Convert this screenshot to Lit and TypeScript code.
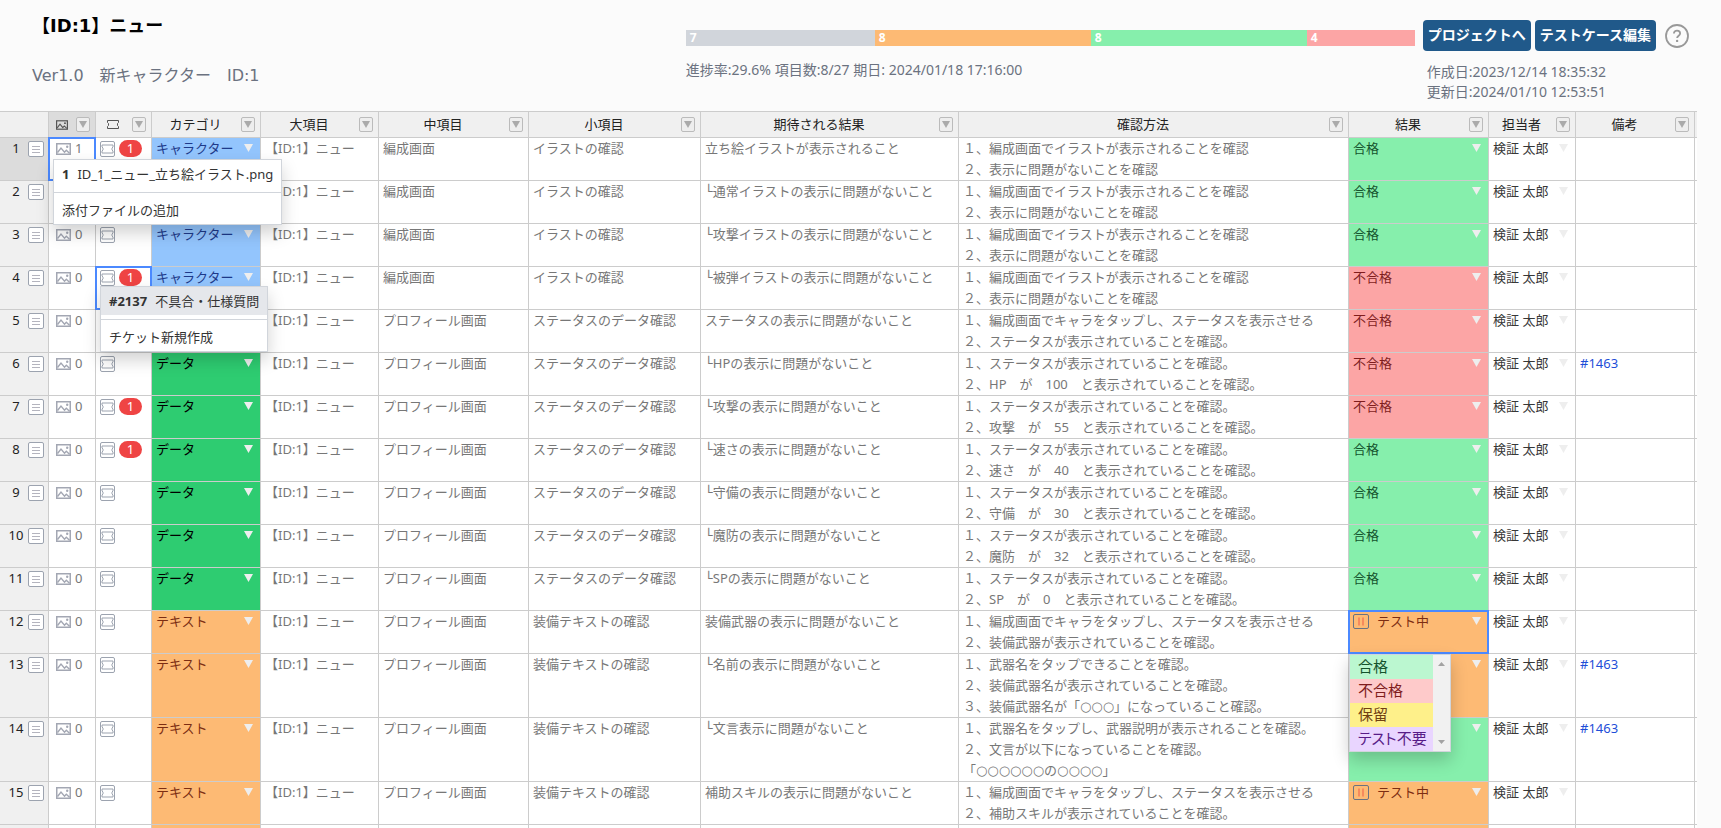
import { LitElement, html, css, svg, nothing } from "lit";
import { customElement } from "lit/decorators.js";
import { classMap } from "lit/directives/class-map.js";
import { styleMap } from "lit/directives/style-map.js";

type Category = "キャラクター" | "データ" | "テキスト";
type Result = "合格" | "不合格" | "テスト中";

interface TestCase {
  no: number;
  files: number;
  tickets: number;
  category: Category;
  middle: string;
  small: string;
  expected: string;
  steps: string[];
  result: Result;
  note?: string;
}

const CATEGORY_CLASS: Record<Category, string> = {
  "キャラクター": "cat-chara",
  "データ": "cat-data",
  "テキスト": "cat-text",
};
const RESULT_CLASS: Record<Result, string> = {
  "合格": "res-pass",
  "不合格": "res-fail",
  "テスト中": "res-testing",
};

const EDIT_1 = "1、編成画面でイラストが表示されることを確認";
const EDIT_2 = "2、表示に問題がないことを確認";
const TAP = "1、編成画面でキャラをタップし、ステータスを表示させる";
const STATUS = "1、ステータスが表示されていることを確認。";

// Step numbers are shown as full-width digits so that they line up with the kana.
const wideNumber = (step: string) =>
  step.replace(/^\d/, (d) => String.fromCharCode(d.charCodeAt(0) + 0xfee0));

const art = (no: number, tickets: number, expected: string, result: Result): TestCase => ({
  no, files: no === 1 ? 1 : 0, tickets, category: "キャラクター", middle: "編成画面",
  small: "イラストの確認", expected, steps: [EDIT_1, EDIT_2], result,
});
const data = (no: number, tickets: number, name: string, value: string, result: Result, note?: string): TestCase => ({
  no, files: 0, tickets, category: "データ", middle: "プロフィール画面",
  small: "ステータスのデータ確認", expected: `└${name}の表示に問題がないこと`,
  steps: [STATUS, `2、${name}　が　${value}　と表示されていることを確認。`], result, note,
});
const text = (no: number, expected: string, steps: string[], result: Result, note?: string): TestCase => ({
  no, files: 0, tickets: 0, category: "テキスト", middle: "プロフィール画面",
  small: "装備テキストの確認", expected, steps, result, note,
});

const CASES: TestCase[] = [
  art(1, 1, "立ち絵イラストが表示されること", "合格"),
  art(2, 0, "└通常イラストの表示に問題がないこと", "合格"),
  art(3, 0, "└攻撃イラストの表示に問題がないこと", "合格"),
  art(4, 1, "└被弾イラストの表示に問題がないこと", "不合格"),
  {
    no: 5, files: 0, tickets: 0, category: "データ", middle: "プロフィール画面",
    small: "ステータスのデータ確認", expected: "ステータスの表示に問題がないこと",
    steps: [TAP, "2、ステータスが表示されていることを確認。"], result: "不合格",
  },
  data(6, 0, "HP", "100", "不合格", "#1463"),
  data(7, 1, "攻撃", "55", "不合格"),
  data(8, 1, "速さ", "40", "合格"),
  data(9, 0, "守備", "30", "合格"),
  data(10, 0, "魔防", "32", "合格"),
  data(11, 0, "SP", "0", "合格"),
  text(12, "装備武器の表示に問題がないこと", [TAP, "2、装備武器が表示されていることを確認。"], "テスト中"),
  text(13, "└名前の表示に問題がないこと", [
    "1、武器名をタップできることを確認。",
    "2、装備武器名が表示されていることを確認。",
    "3、装備武器名が「○○○」になっていること確認。",
  ], "テスト中", "#1463"),
  text(14, "└文言表示に問題がないこと", [
    "1、武器名をタップし、武器説明が表示されることを確認。",
    "2、文言が以下になっていることを確認。",
    "「○○○○○○の○○○○」",
  ], "合格", "#1463"),
  text(15, "補助スキルの表示に問題がないこと", [TAP, "2、補助スキルが表示されていることを確認。"], "テスト中"),
];

const SEGMENTS = [
  { count: 7, color: "#d1d5db" },
  { count: 8, color: "#fdba74" },
  { count: 8, color: "#86efac" },
  { count: 4, color: "#fca5a5" },
];

const imageShape = svg`
  <rect x="0.75" y="0.75" width="13.5" height="10.5" fill="none" stroke="currentColor" stroke-width="1.5"/>
  <path d="M1.5 9.5 L5 5 L8.5 9.2 L10.3 7.2 L13.5 10.2" fill="none" stroke="currentColor" stroke-width="1.4"/>
  <circle cx="11.2" cy="3.7" r="1.2" fill="currentColor"/>`;
const ticketShape = svg`
  <path d="M0.5 0.5 H11.5 V2.5 L10.5 3.5 V5.5 L11.5 6.5 V8.5 H0.5 V6.5 L1.5 5.5 V3.5 L0.5 2.5 Z"
    fill="none" stroke="currentColor"/>`;

const imageIcon = (w: number, h: number) =>
  html`<svg width=${w} height=${h} viewBox="0 0 15 12" aria-hidden="true">${imageShape}</svg>`;
const ticketHeadIcon = html`<svg width="12" height="9" viewBox="0 0 12 9" aria-hidden="true">${ticketShape}</svg>`;
const ticketBoxIcon = html`<svg width="15" height="16" viewBox="0 0 15 16" aria-hidden="true">
  <rect x="0.5" y="0.5" width="14" height="15" rx="1.5" fill="none" stroke="currentColor"/>
  <g transform="translate(1.5 3.5)">${ticketShape}</g></svg>`;
const listIcon = html`<svg width="16" height="16" viewBox="0 0 16 16" aria-hidden="true">
  <rect x="0.5" y="0.5" width="15" height="15" rx="1.5" fill="#fff" stroke="currentColor"/>
  <path d="M4 5.5H12M4 8.5H12M4 11.5H12" stroke="#b4b4be"/></svg>`;
const pauseIcon = html`<svg width="16" height="15" viewBox="0 0 16 15" aria-hidden="true">
  <rect x="0.5" y="0.5" width="15" height="14" rx="1.5" fill="none" stroke="#6b7280"/>
  <path d="M6 3.5V11.5M10 3.5V11.5" stroke="#ef5a44"/></svg>`;
const arrow = html`<svg class="arrow" width="9" height="8" viewBox="0 0 9 8" aria-hidden="true">
  <path d="M0 0H9L4.5 8Z" fill="#eee"/></svg>`;

@customElement("app-root")
export class AppRoot extends LitElement {
  static styles = css`
    :host {
      display: flex;
      flex-direction: column;
      height: 100vh;
      overflow: hidden;
      background: #fbfbfb;
      color: #777;
      font: 13px/21px "Noto Sans", "DejaVu Sans", "Noto Sans CJK JP", sans-serif;
    }
    * { box-sizing: border-box; }
    svg { display: block; flex: none; }
    button, select { font: inherit; color: inherit; background: none; border: 0; margin: 0; padding: 0; }
    button { cursor: pointer; }

    .head {
      display: grid;
      grid-template-columns: minmax(0, 654fr) minmax(0, 729fr) auto;
      height: 111px;
      flex: none;
      padding: 0 32px;
      color: #6b7280;
      font-size: 14px;
      line-height: 20px;
    }
    .title {
      margin: 13px 0 0;
      color: #000;
      font: bold 18px/26px "DejaVu Sans", "Noto Sans CJK JP", sans-serif;
    }
    .subtitle {
      margin: 25px 0 0;
      font: 16px/24px "DejaVu Sans", "Noto Sans CJK JP", sans-serif;
    }
    .bar { display: flex; height: 16px; margin-top: 30px; }
    .segment {
      padding-left: 4px;
      color: #fff;
      font-size: 12px;
      line-height: 16px;
      font-weight: bold;
    }
    .summary { margin: 14px 0 0; }
    .side { padding-left: 8px; }
    .actions { display: flex; align-items: center; gap: 4px; margin-top: 20px; }
    .action {
      height: 31px;
      padding: 0 5px 2px;
      border-radius: 4px;
      background: #20598a;
      color: #fff;
      font-weight: bold;
      white-space: nowrap;
    }
    .help { margin-left: 5px; }
    .dates { margin: 11px 0 0 4px; }
    .dates p { margin: 0; }

    .sheet { margin-right: 24px; }
    table {
      width: 100%;
      min-width: 1500px;
      table-layout: fixed;
      border-collapse: separate;
      border-spacing: 0;
    }
    .w-no { width: 49px; }
    .w-file { width: 47px; }
    .w-ticket { width: 56px; }
    .w-cat { width: 109px; }
    .w-large { width: 118px; }
    .w-middle { width: 150px; }
    .w-small { width: 172px; }
    .w-expected { width: 258px; }
    .w-result { width: 140px; }
    .w-person { width: 87px; }
    .w-note { width: 119px; }
    .w-rest { width: 2px; }

    th, td {
      padding: 0;
      border: 0 solid #ccc;
      border-width: 0 1px 1px 0;
      vertical-align: top;
      font-weight: normal;
      text-align: left;
    }
    th { background: #f0f0f0; color: #222; }
    td { position: relative; height: 43px; padding: 0 4px; background: #fff; }
    thead th { height: 27px; border-top-width: 1px; vertical-align: middle; }
    .rest { border-right-width: 0; padding: 0; }
    th.active { background: #dcdcdc; }
    .th { display: flex; align-items: center; gap: 6px; padding: 0 5px 0 4px; }
    .label { display: flex; flex: 1; justify-content: center; color: #222; }
    .label svg { color: #555; }
    .filter {
      display: grid;
      place-items: center;
      width: 14px;
      height: 15px;
      border: 1px solid #bbb;
      border-radius: 2px;
      background: #eee;
    }
    .row-head { display: flex; align-items: center; height: 21px; padding: 0 4px; }
    .row-no { flex: 1; text-align: center; }
    .icon { color: #9ca3af; display: flex; align-items: center; }
    .files { display: flex; align-items: center; gap: 4px; height: 21px; padding-left: 3px; }
    .files svg { color: #a3a7b3; }
    .tickets { display: flex; align-items: center; gap: 4px; height: 21px; }
    .badge {
      width: 23px;
      height: 17px;
      border-radius: 9px;
      background: #ef4444;
      color: #fff;
      line-height: 17px;
      text-align: center;
    }
    .steps { white-space: pre-wrap; }

    .pick { display: grid; grid-template-columns: auto minmax(0, 1fr); align-items: center; height: 21px; column-gap: 8px; }
    .pick select {
      grid-area: 1 / 2;
      width: 100%;
      height: 21px;
      appearance: none;
      outline: none;
    }
    .pick.plain { column-gap: 0; }
    .pick .arrow { grid-area: 1 / 2; justify-self: end; margin: 0 3px 2px 0; pointer-events: none; }
    .pick option { color: #333; background: #fff; }

    .cat-chara { background: #93c5fd; color: #1e3a8a; }
    .cat-data { background: #2ecc71; color: #000; }
    .cat-text { background: #fdba74; color: #7c2d12; }
    .res-pass { background: #86efac; color: #14532d; }
    .res-fail { background: #fca5a5; color: #7f1d1d; }
    .res-testing { background: #fdba74; color: #7c2d12; }
    .person { color: #373737; }
    .note { color: #1d4ed8; text-decoration: none; }

    .selected::after {
      content: "";
      position: absolute;
      inset: -1px;
      border: 2px solid #4b89ff;
      pointer-events: none;
      z-index: 1;
    }

    .menu {
      position: absolute;
      left: 4px;
      top: 21px;
      z-index: 3;
      width: max-content;
      border: 1px solid #d1d5db;
      background: #fff;
      color: #333;
      box-shadow: 0 8px 16px rgba(0, 0, 0, 0.18);
    }
    .ticket-menu { top: 19px; }
    .item { display: flex; align-items: center; gap: 8px; width: 100%; height: 28px; padding: 0 8px; white-space: nowrap; }
    .item.hover { background: #e5e7eb; }
    .rule { height: 1px; margin: 4px 0 3px; border: 0; background: #d1d5db; }

    .choices {
      position: absolute;
      left: 0;
      top: 43px;
      z-index: 3;
      display: flex;
      width: 102px;
      border: 1px solid #d1d5db;
      background: #f1f1f1;
      box-shadow: 0 8px 16px rgba(0, 0, 0, 0.2);
    }
    .options { flex: 1; margin: 0; padding: 0; list-style: none; font-size: 15px; line-height: 22px; font-feature-settings: "palt"; }
    .option { height: 24px; padding-left: 8px; white-space: nowrap; }
    .o-pass { background: #bbf7d0; color: #14532d; }
    .o-fail { background: #fecaca; color: #7f1d1d; }
    .o-hold { background: #fef08a; color: #713f12; }
    .o-skip { background: #e9d5ff; color: #581c87; }
    .track { display: flex; flex-direction: column; justify-content: space-between; align-items: center; width: 17px; padding: 7px 0; }
  `;

  private heading(label: unknown, name: string, active = false) {
    return html`<th scope="col" class=${classMap({ active })}>
      <div class="th">
        <span class="label">${label}</span>
        <button class="filter" aria-label="${name} フィルター">
          <svg width="8" height="7" viewBox="0 0 8 7"><path d="M0 0H8L4 7Z" fill="#aaa" /></svg>
        </button>
      </div>
    </th>`;
  }

  private pick(name: string, value: string, choices: string[], icon: unknown = nothing) {
    return html`<div class=${classMap({ pick: true, plain: icon === nothing })}>
      ${icon}
      <select aria-label=${name}>
        ${choices.map((c) => html`<option ?selected=${c === value}>${c}</option>`)}
      </select>
      ${arrow}
    </div>`;
  }

  private fileMenu() {
    return html`<div class="menu">
      <button class="item"><b>1</b><span>ID_1_ニュー_立ち絵イラスト.png</span></button>
      <hr class="rule" />
      <button class="item">添付ファイルの追加</button>
    </div>`;
  }

  private ticketMenu() {
    return html`<div class="menu ticket-menu">
      <button class="item hover"><b>#2137</b><span>不具合・仕様質問</span></button>
      <hr class="rule" />
      <button class="item">チケット新規作成</button>
    </div>`;
  }

  private resultList() {
    return html`<div class="choices">
      <ul class="options" role="listbox" aria-label="結果">
        <li class="option o-pass" role="option">合格</li>
        <li class="option o-fail" role="option">不合格</li>
        <li class="option o-hold" role="option">保留</li>
        <li class="option o-skip" role="option">テスト不要</li>
      </ul>
      <div class="track" aria-hidden="true">
        <svg width="7" height="4" viewBox="0 0 7 4"><path d="M0 4H7L3.5 0Z" fill="#a3a3a3" /></svg>
        <svg width="7" height="4" viewBox="0 0 7 4"><path d="M0 0H7L3.5 4Z" fill="#a3a3a3" /></svg>
      </div>
    </div>`;
  }

  private row(c: TestCase) {
    return html`<tr>
      <th scope="row" class=${classMap({ active: c.no === 1 })}>
        <div class="row-head">
          <span class="row-no">${c.no}</span>
          <button class="icon" aria-label="詳細">${listIcon}</button>
        </div>
      </th>
      <td class=${classMap({ selected: c.no === 1 })}>
        <button class="files">${imageIcon(15, 12)}<span>${c.files}</span></button>
        ${c.no === 1 ? this.fileMenu() : nothing}
      </td>
      <td class=${classMap({ selected: c.no === 4 })}>
        <div class="tickets">
          <button class="icon" aria-label="チケット">${ticketBoxIcon}</button>
          ${c.tickets ? html`<span class="badge">${c.tickets}</span>` : nothing}
        </div>
        ${c.no === 4 ? this.ticketMenu() : nothing}
      </td>
      <td class=${CATEGORY_CLASS[c.category]}>${this.pick("カテゴリ", c.category, Object.keys(CATEGORY_CLASS))}</td>
      <td>【ID:1】ニュー</td>
      <td>${c.middle}</td>
      <td>${c.small}</td>
      <td>${c.expected}</td>
      <td>${c.steps.map((s) => html`<div class="steps">${wideNumber(s)}</div>`)}</td>
      <td class=${classMap({ [RESULT_CLASS[c.result]]: true, selected: c.no === 12 })}>
        ${this.pick("結果", c.result, Object.keys(RESULT_CLASS), c.result === "テスト中" ? pauseIcon : nothing)}
        ${c.no === 12 ? this.resultList() : nothing}
      </td>
      <td class="person">${this.pick("担当者", "検証 太郎", ["検証 太郎"])}</td>
      <td>${c.note ? html`<a class="note" href="#">${c.note}</a>` : nothing}</td>
      <td class="rest"></td>
    </tr>`;
  }

  render() {
    const total = SEGMENTS.reduce((sum, s) => sum + s.count, 0);
    return html`
      <header class="head">
        <div>
          <h1 class="title">【ID:1】ニュー</h1>
          <p class="subtitle">Ver1.0　新キャラクター　ID:1</p>
        </div>
        <div>
          <div class="bar">
            ${SEGMENTS.map((s) => html`<div class="segment"
              style=${styleMap({ width: `${(s.count / total) * 100}%`, background: s.color })}>${s.count}</div>`)}
          </div>
          <p class="summary">進捗率:29.6% 項目数:8/27 期日: 2024/01/18 17:16:00</p>
        </div>
        <div class="side">
          <div class="actions">
            <button class="action">プロジェクトへ</button>
            <button class="action">テストケース編集</button>
            <button class="help" aria-label="ヘルプ">
              <svg width="24" height="24" viewBox="0 0 24 24">
                <circle cx="12" cy="12" r="11" fill="none" stroke="#999" stroke-width="1.8" />
                <path d="M8.9 9.6C8.9 7.7 10.2 6.7 12 6.7C13.8 6.7 15.1 7.8 15.1 9.4C15.1 11.6 12.1 11.8 12.1 14.1"
                  fill="none" stroke="#999" stroke-width="1.8" />
                <circle cx="12.1" cy="16.9" r="1.2" fill="#999" />
              </svg>
            </button>
          </div>
          <div class="dates">
            <p>作成日:2023/12/14 18:35:32</p>
            <p>更新日:2024/01/10 12:53:51</p>
          </div>
        </div>
      </header>
      <main class="sheet">
        <table>
          <colgroup>
            <col class="w-no" /><col class="w-file" /><col class="w-ticket" /><col class="w-cat" />
            <col class="w-large" /><col class="w-middle" /><col class="w-small" /><col class="w-expected" />
            <col /><col class="w-result" /><col class="w-person" /><col class="w-note" /><col class="w-rest" />
          </colgroup>
          <thead>
            <tr>
              <th></th>
              ${this.heading(imageIcon(12, 10), "添付ファイル", true)}
              ${this.heading(ticketHeadIcon, "チケット")}
              ${["カテゴリ", "大項目", "中項目", "小項目", "期待される結果", "確認方法", "結果", "担当者", "備考"]
                .map((n) => this.heading(n, n))}
              <th class="rest"></th>
            </tr>
          </thead>
          <tbody>
            ${CASES.map((c) => this.row(c))}
            <tr>
              <th></th><td></td><td></td><td class="cat-text"></td><td></td><td></td><td></td>
              <td></td><td></td><td class="res-testing"></td><td></td><td></td><td class="rest"></td>
            </tr>
          </tbody>
        </table>
      </main>
    `;
  }
}
